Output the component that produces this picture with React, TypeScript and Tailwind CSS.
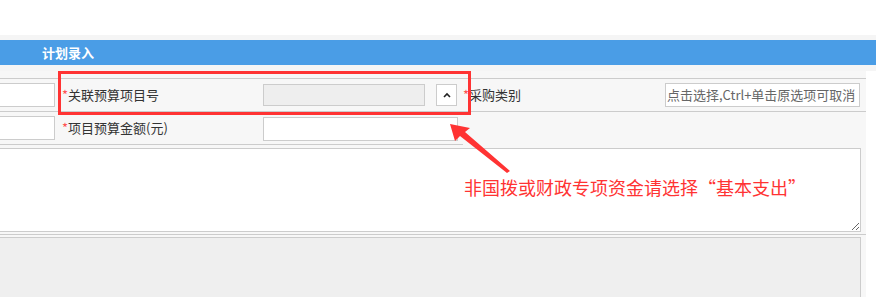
const font = { fontFamily: '"Noto Sans CJK SC", "Microsoft YaHei", sans-serif' };

function Label({ text }: { text: string }) {
  return (
    <span className="text-[13px] text-[#333] leading-none">
      <span className="text-[#ff5151]">*</span>
      {text}
    </span>
  );
}

export default function App() {
  return (
    <div
      className="relative w-[876px] h-[297px] bg-white overflow-hidden"
      style={font}>
      <div className="h-[35px]" />
      <div className="h-[5px] bg-[#f5f5f5]" />
      {/* Panel header */}
      <div className="h-[25px] bg-[#4a9de6] flex items-center pl-[42px]">
        <span className="text-white text-[13px] font-bold">计划录入</span>
      </div>
      <div className="h-[6px] bg-[#f5f5f5]" />

      <div className="w-[866px] bg-[#f7f7f7]">
        <div className="h-[7px]" />

        {/* Row 1 */}
        <div className="flex h-[34px] border-t border-b border-[#ccc]">
          <div className="w-[58px] pt-[4px]">
            <div className="ml-[-2px] w-[57px] h-[24px] bg-white border border-[#ccc]" />
          </div>
          <div className="w-[205px] pl-[4px] flex items-center pb-[2px]">
            <Label text="关联预算项目号" />
          </div>
          <div className="w-[200px] flex items-start pt-[5px]">
            <div className="w-[162px] h-[22px] bg-[#eee] border border-[#ccc]" />
            <div className="ml-[11px] w-[21px] h-[22px] bg-white border border-[#ccc] flex items-center justify-center">
              <svg width="8" height="6" viewBox="0 0 8 6">
                <path d="M1 5 L4 2 L7 5" fill="none" stroke="#222" strokeWidth="1.6" />
              </svg>
            </div>
          </div>
          <div className="w-[202px] flex items-center pb-[2px]">
            <Label text="采购类别" />
          </div>
          <div className="flex-1 pt-[4px]">
            <div className="w-[195px] h-[24px] bg-white border border-[#ccc] overflow-hidden whitespace-nowrap pl-[1px] text-[13px] text-[#666] leading-[22px]">
              点击选择,Ctrl+单击原选项可取消
            </div>
          </div>
        </div>

        {/* Row 2 */}
        <div className="flex h-[33px]">
          <div className="flex w-[463px] border-b border-[#ccc]">
            <div className="w-[58px] pt-[4px]">
              <div className="ml-[-2px] w-[57px] h-[24px] bg-white border border-[#ccc]" />
            </div>
            <div className="w-[205px] pl-[4px] flex items-center pb-[1px]">
              <Label text="项目预算金额(元)" />
            </div>
            <div className="pt-[5px]">
              <div className="w-[195px] h-[24px] bg-white border border-[#ccc]" />
            </div>
          </div>
        </div>

        {/* Row 3: textarea */}
        <div className="pt-[3px] pb-[2px] border-b border-[#ccc]">
          <textarea
            className="block ml-[-2px] w-[863px] h-[84px] bg-white border border-[#ccc] outline-none resize"
            readOnly
          />
        </div>

        {/* Row 4 */}
        <div className="pt-[2px]">
          <div className="ml-[-2px] w-[863px] h-[70px] bg-[#efefef] border border-[#ccc]" />
        </div>
      </div>

      {/* Annotation overlay */}
      <div className="absolute left-[58px] top-[71px] w-[413px] h-[44px] border-[3px] border-[#f33]" />
      <svg
        className="absolute left-0 top-0"
        width="876"
        height="297"
        viewBox="0 0 876 297">
        <polygon
          points="450,124 470,128 465,132 510,171 507,173 460,136 455,141"
          fill="#f33"
        />
      </svg>
      <div className="absolute left-[464px] top-[175px] text-[18px] leading-[24px] text-[#f33] whitespace-nowrap">
        非国拨或财政专项资金请选择“基本支出”
      </div>
    </div>
  );
}
